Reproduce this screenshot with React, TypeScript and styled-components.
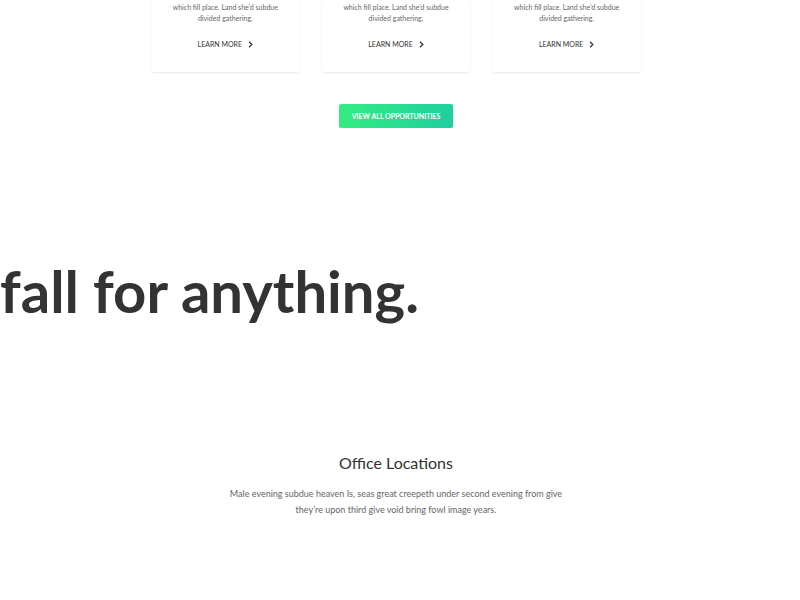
import React from "react";
import styled, { createGlobalStyle } from "styled-components";

const GlobalStyle = createGlobalStyle`
  *, *::before, *::after { box-sizing: border-box; }
  body {
    margin: 0;
    background: #fff;
    color: #333;
    font-family: Lato, "Open Sans", sans-serif;
    overflow-x: hidden;
  }
  h1, h2, p { margin: 0; }
`;

const Page = styled.main`
  display: flex;
  flex-direction: column;
  padding-right: 8px;
`;

const Opportunities = styled.section`
  display: flex;
  flex-direction: column;
  align-items: center;
  gap: 32px;
`;

const CardGrid = styled.div`
  display: grid;
  grid-template-columns: repeat(3, minmax(0, 1fr));
  gap: 23px;
  width: 100%;
  max-width: 489px;
`;

const Card = styled.article`
  display: flex;
  flex-direction: column;
  align-items: center;
  gap: 14px;
  padding: 2px 20px 22px;
  border-radius: 2px;
  box-shadow: 0 1px 2px rgba(0, 0, 0, 0.09);
`;

const CardText = styled.p`
  color: #666;
  font-size: 7px;
  line-height: 11px;
  text-align: center;
`;

const CardLink = styled.a`
  display: inline-flex;
  align-items: center;
  gap: 6px;
  color: #333;
  font-size: 7px;
  line-height: 12px;
  text-decoration: none;
  text-transform: uppercase;
`;

const ViewAllButton = styled.button`
  padding: 0 13px;
  border: 0;
  border-radius: 2px;
  background: linear-gradient(100deg, #33ed81, #1dcf9f);
  color: #fff;
  font: 700 7px/24px Lato, "Open Sans", sans-serif;
  text-transform: uppercase;
  cursor: pointer;
`;

const Statement = styled.h1`
  margin-top: 119px;
  font-size: 58px;
  font-weight: 700;
  line-height: 88px;
  white-space: nowrap;
`;

const Locations = styled.section`
  display: flex;
  flex-direction: column;
  align-items: center;
  gap: 10px;
  margin-top: 115px;
  padding-bottom: 80px;
  text-align: center;
`;

const LocationsTitle = styled.h2`
  font-size: 16px;
  font-weight: 400;
  line-height: 26px;
`;

const LocationsText = styled.p`
  color: #666;
  font-size: 9px;
  line-height: 16px;
`;

const Line = styled.span`
  display: block;
  white-space: nowrap;
`;

const Chevron = () => (
  <svg width="5" height="7" viewBox="0 0 5 7" fill="none" stroke="#333" strokeWidth="1.2" aria-hidden="true">
    <path d="M1 0.7 L3.9 3.5 L1 6.3" />
  </svg>
);

const cards = ["first", "second", "third"];

export default function App() {
  return (
    <>
      <GlobalStyle />
      <Page>
        <Opportunities>
          <CardGrid>
            {cards.map((id) => (
              <Card key={id}>
                <CardText>
                  <Line>which fill place. Land she’d subdue</Line>
                  <Line>divided gathering.</Line>
                </CardText>
                <CardLink href="#">
                  Learn more
                  <Chevron />
                </CardLink>
              </Card>
            ))}
          </CardGrid>
          <ViewAllButton type="button">View all opportunities</ViewAllButton>
        </Opportunities>
        <Statement>fall for anything.</Statement>
        <Locations>
          <LocationsTitle>Office Locations</LocationsTitle>
          <LocationsText>
            <Line>Male evening subdue heaven Is, seas great creepeth under second evening from give</Line>
            <Line>they’re upon third give void bring fowl image years.</Line>
          </LocationsText>
        </Locations>
      </Page>
    </>
  );
}
